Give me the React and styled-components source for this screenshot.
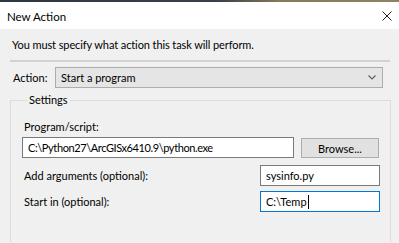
import React from "react";
import styled, { createGlobalStyle } from "styled-components";

const Global = createGlobalStyle`
  html, body { margin: 0; padding: 0; background: #f0f0f0; }
  body { font-family: Lato, "Noto Sans", sans-serif; font-size: 11px; color: #000; overflow: hidden; }
  * { box-sizing: border-box; }
`;

const Window = styled.div`
  width: 399px;
  height: 243px;
  display: flex;
  flex-direction: column;
  background: #f0f0f0;
`;

const Strip = styled.div`
  height: 2px;
  background: linear-gradient(90deg, #2e3640 0%, #3b4148 55%, #857a5c 70%, #8c8464 100%);
`;

const TitleBar = styled.div`
  height: 27px;
  background: #fff;
  display: flex;
  align-items: center;
  justify-content: space-between;
  padding: 1px 7px 0 7px;
`;

const Title = styled.span`
  font-size: 11.5px;
  color: #000;
`;

const Body = styled.div`
  padding: 0 9px 0 10px;
  display: flex;
  flex-direction: column;
`;

const Instruction = styled.div`
  margin-top: 8px;
  padding-left: 2px;
  line-height: 16px;
  letter-spacing: -0.1px;
`;

const Separator = styled.div`
  margin-top: 7px;
  height: 2px;
  width: 380px;
  background: #d2d2d2;
`;

const ActionRow = styled.div`
  margin-top: 5px;
  display: flex;
  align-items: center;
`;

const ActionLabel = styled.span`
  width: 45px;
  padding-left: 3px;
`;

const Select = styled.div`
  width: 328px;
  height: 21px;
  background: #e5e5e5;
  border: 1px solid #adadad;
  display: flex;
  align-items: center;
  justify-content: space-between;
  padding: 0 6px 0 5px;
`;

const Group = styled.fieldset`
  margin: 5px 0 0 0;
  width: 381px;
  border: 1px solid #dcdcdc;
  border-bottom: none;
  padding: 12px 11px 30px 11px;
  min-width: 0;
`;

const Legend = styled.legend`
  padding: 0 2px;
  margin-left: 5px;
  line-height: 14px;
`;

const FieldLabel = styled.div`
  padding-left: 2px;
  line-height: 16px;
`;

const ProgramRow = styled.div`
  margin-top: 2px;
  display: flex;
  align-items: flex-end;
  gap: 7px;
`;

const Input = styled.div`
  width: ${p => p.$w}px;
  height: 21px;
  background: #fff;
  border: 1px solid ${p => (p.$focused ? "#0078d7" : "#7a7a7a")};
  display: flex;
  align-items: center;
  padding-left: 5px;
  white-space: nowrap;
  overflow: hidden;
  letter-spacing: ${p => p.$tight ? "-0.4px" : "normal"};
`;

const Button = styled.div`
  width: 78px;
  height: 20px;
  background: #e1e1e1;
  border: 1px solid #adadad;
  display: flex;
  align-items: center;
  justify-content: center;
`;

const ParamGrid = styled.div`
  margin-top: 7px;
  display: grid;
  grid-template-columns: 238px 120px;
  row-gap: 5px;
  align-items: center;
`;

const Caret = styled.span`
  display: inline-block;
  width: 1px;
  height: 14px;
  background: #000;
  margin-left: 1px;
`;

export default function App() {
  return (
    <>
      <Global />
      <Window>
        <Strip />
        <TitleBar>
          <Title>New Action</Title>
          <svg width="10" height="10" viewBox="0 0 10 10">
            <path d="M0.5 0.5 L9.5 9.5 M9.5 0.5 L0.5 9.5" stroke="#222" strokeWidth="1" />
          </svg>
        </TitleBar>
        <Body>
          <Instruction>You must specify what action this task will perform.</Instruction>
          <Separator />
          <ActionRow>
            <ActionLabel>Action:</ActionLabel>
            <Select>
              <span>Start a program</span>
              <svg width="8" height="5" viewBox="0 0 8 5">
                <path d="M0.5 0.5 L4 4 L7.5 0.5" stroke="#606060" strokeWidth="1.2" fill="none" />
              </svg>
            </Select>
          </ActionRow>
          <Group>
            <Legend>Settings</Legend>
            <FieldLabel>Program/script:</FieldLabel>
            <ProgramRow>
              <Input $w={272} $tight>C:\Python27\ArcGISx6410.9\python.exe</Input>
              <Button>Browse...</Button>
            </ProgramRow>
            <ParamGrid>
              <FieldLabel>Add arguments (optional):</FieldLabel>
              <Input $w={120}>sysinfo.py</Input>
              <FieldLabel>Start in (optional):</FieldLabel>
              <Input $w={120} $focused>
                C:\Temp<Caret />
              </Input>
            </ParamGrid>
          </Group>
        </Body>
      </Window>
    </>
  );
}
